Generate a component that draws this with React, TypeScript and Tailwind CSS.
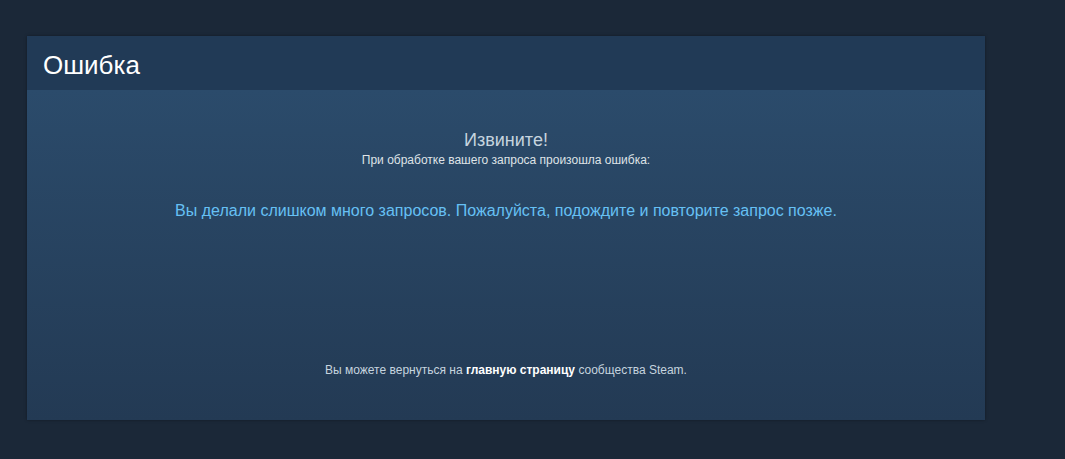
import React from 'react';

const App: React.FC = () => {
  return (
    <div
      className="min-h-[459px] w-full bg-[#1b2838] pt-9 pl-[27px]"
      style={{ fontFamily: '"Liberation Sans", Arial, sans-serif' }}
    >
      <div className="w-[958px] shadow-[0_0_3px_rgba(0,0,0,0.35)]">
        {/* Header */}
        <div className="h-[54px] bg-[#213a56] px-4 pt-[3px] flex items-center">
          <h1 className="text-[26px] text-white font-normal leading-none">Ошибка</h1>
        </div>

        {/* Body */}
        <div className="h-[330px] bg-gradient-to-b from-[#2b4b6b] to-[#233a54] flex flex-col items-center text-center pt-[39px] pb-[42px]">
          <h2 className="text-[18px] leading-[22px] text-[#c6d4df]">Извините!</h2>
          <p className="mt-[1px] text-[12px] leading-[16px] text-[#dfe3e6]">
            При обработке вашего запроса произошла ошибка:
          </p>
          <p className="mt-[33px] text-[16px] leading-[20px] text-[#66c0f4]">
            Вы делали слишком много запросов. Пожалуйста, подождите и повторите запрос позже.
          </p>
          <p className="mt-auto text-[12px] leading-[16px] text-[#c6d4df]">
            Вы можете вернуться на{' '}
            <a href="#" className="font-bold text-white">главную страницу</a>{' '}
            сообщества Steam.
          </p>
        </div>
      </div>
    </div>
  );
};

export default App;
